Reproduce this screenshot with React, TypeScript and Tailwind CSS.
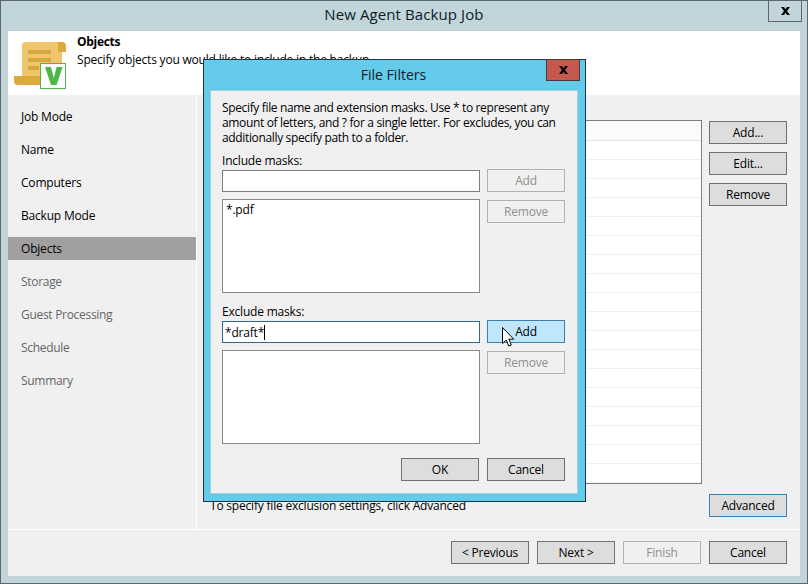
import type { ReactNode } from "react";

const font = { fontFamily: '"Open Sans", "Noto Sans", sans-serif' };

const navItems = [
	{ label: "Job Mode" },
	{ label: "Name" },
	{ label: "Computers" },
	{ label: "Backup Mode" },
	{ label: "Objects", active: true },
	{ label: "Storage", muted: true },
	{ label: "Guest Processing", muted: true },
	{ label: "Schedule", muted: true },
	{ label: "Summary", muted: true },
];

function Btn({
	children,
	state = "normal",
	className = "",
}: {
	children: ReactNode;
	state?: "normal" | "disabled" | "focus" | "hover";
	className?: string;
}) {
	const look = {
		normal: "bg-[#dddddd] border-[#707070] text-black",
		disabled: "bg-[#f0f0f0] border-[#adb2b5] text-[#8f8f8f]",
		focus: "bg-[#dddddd] border-[#3c7fb1] text-black",
		hover: "bg-[#bee6fd] border-[#3c7fb1] text-black",
	}[state];
	return (
		<button
			className={`flex h-[23px] w-[78px] shrink-0 items-center justify-center border text-[12px] tracking-[-0.2px] ${look} ${className}`}
		>
			{children}
		</button>
	);
}

function ScrollIcon() {
	return (
		<svg width="54" height="48" viewBox="0 0 54 48" className="shrink-0">
			<path d="M8 40V4a4 4 0 0 1 4-4h36v40z" fill="#efc66e" />
			<path d="M44 0h4a4 4 0 0 1 4 4v6h-8z" fill="#dbaa3c" />
			<path d="M0 34h28v9H4a4 4 0 0 1-4-4z" fill="#dbaa3c" />
			<rect x="14" y="8" width="23" height="4" fill="#d6a93f" />
			<rect x="14" y="16" width="23" height="4" fill="#d6a93f" />
			<rect x="14" y="24" width="11" height="4" fill="#d6a93f" />
			<rect x="26.500" y="21.500" width="25" height="25" fill="#fff" stroke="#4db848" />
			<path d="M31 25h6l2.800 11 2.800-11h6l-6 18h-5.600z" fill="#4db848" />
		</svg>
	);
}

function CloseGlyph() {
	return (
		<svg width="9" height="8" viewBox="0 0 9 8">
			<path d="M0 0h3l1.500 2.200 1.500-2.200h3l-3 4 3 4h-3l-1.500-2.200-1.500 2.200h-3l3-4z" fill="#000" />
		</svg>
	);
}

function Cursor() {
	return (
		<svg width="13" height="21" viewBox="0 0 13 21" className="absolute left-[15px] top-[7px]">
			<path
				d="M.5.500v16l3.700-3.500 2.500 6 2.600-1-2.500-5.800h5z"
				fill="#fff"
				stroke="#000"
				strokeWidth="1"
			/>
		</svg>
	);
}

function MaskGroup({
	label,
	className,
	inputValue,
	listValue,
	addState,
}: {
	label: string;
	className: string;
	inputValue?: string;
	listValue?: string;
	addState: "disabled" | "hover";
}) {
	return (
		<div className={className}>
			<div className="h-[17px] pt-px text-[12px] leading-[16px] tracking-[-0.2px]">{label}</div>
			<div className="flex gap-[7px]">
				<div className="flex w-[258px] flex-col gap-[7px] pt-[1px]">
					<div
						className={`flex h-[22px] items-center border bg-white px-[2px] pt-px text-[12px] tracking-[-0.2px] ${
							inputValue ? "border-[#2f6a92]" : "border-[#7a7f85]"
						}`}
					>
						{inputValue}
						{inputValue && <span className="h-[15px] w-px bg-black" />}
					</div>
					<div className="h-[94px] border border-[#858a8f] bg-white px-[3px] py-[2px] text-[12px] leading-[16px] tracking-[-0.2px]">
						{listValue}
					</div>
				</div>
				<div className="relative flex flex-col gap-2">
					<Btn state={addState}>Add</Btn>
					{addState === "hover" && <Cursor />}
					<Btn state="disabled">Remove</Btn>
				</div>
			</div>
		</div>
	);
}

function FileFilters() {
	return (
		<div className="absolute left-[202px] top-[58px] flex h-[443px] w-[383px] flex-col border border-[#1d3442] bg-[#65cbeb]">
			<div className="relative flex h-[30px] shrink-0 items-center justify-center pb-px pr-[2px] text-[14px] text-[#0c1d26]">
				File Filters
				<div className="absolute right-[5px] top-[-1px] flex h-[22px] w-[34px] items-center justify-center border border-[#4a3a38] bg-[#c4594f]">
					<CloseGlyph />
				</div>
			</div>
			<div className="mb-[7px] ml-[6px] mr-[7px] flex min-h-0 flex-1 flex-col border border-[#a5cfdd] bg-[#f0f0f0] pl-[11px] pt-[9px]">
				<p className="w-[345px] text-[12px] leading-[15px] tracking-[-0.35px] text-black">
					Specify file name and extension masks. Use * to represent any amount of letters, and ? for a single letter. For excludes, you can additionally specify path to a folder.
				</p>
				<MaskGroup label="Include masks:" className="mt-[7px]" listValue="*.pdf" addState="disabled" />
				<MaskGroup label="Exclude masks:" className="mt-[10px]" inputValue="*draft*" addState="hover" />
				<div className="mt-[14px] flex w-[343px] justify-end gap-2">
					<Btn>OK</Btn>
					<Btn>Cancel</Btn>
				</div>
			</div>
		</div>
	);
}

export default function App() {
	return (
		<div
			className="relative flex h-[584px] w-[808px] flex-col overflow-hidden border border-[#5c6870] bg-[#c2d5da] px-[7px] pb-[7px] text-black"
			style={font}
		>
			<div className="relative flex h-[30px] shrink-0 items-center justify-center pb-[3px] text-[15px] tracking-[0.1px] text-[#0c1d26]">
				New Agent Backup Job
				<div className="absolute right-[-2px] top-[-1px] flex h-[22px] w-[34px] items-center justify-center border border-[#5c6870]">
					<CloseGlyph />
				</div>
			</div>
			<div className="flex min-h-0 flex-1 flex-col bg-[#f0f0f0]">
				<div className="flex h-[64px] shrink-0 bg-white pl-[6px] pt-[11px]">
					<ScrollIcon />
					<div className="-mt-[8px] pl-[9px]">
						<div className="text-[12px] font-bold leading-[16px] tracking-[-0.3px]">Objects</div>
						<div className="mt-[2px] text-[12px] leading-[16px] tracking-[-0.2px]">
							Specify objects you would like to include in the backup
						</div>
					</div>
				</div>
				<div className="flex min-h-0 flex-1 border-b border-white">
					<div className="w-[189px] shrink-0 border-r border-white pt-[10px]">
						{navItems.map((item) => (
							<div
								key={item.label}
								className={`mb-[10px] flex h-[23px] items-center pl-[13px] pt-px text-[12px] ${
									item.muted ? "tracking-[-0.3px] text-[#666666]" : "tracking-[-0.2px]"
								} ${item.active ? "bg-[#a0a0a0]" : ""}`}
							>
								{item.label}
							</div>
						))}
					</div>
					<div className="flex min-w-0 flex-1 pl-[11px] pt-[25px]">
						<div className="flex-1">
							<div className="h-[364px] w-[494px] overflow-hidden border border-[#7a7f85] bg-white">
								<div className="h-[20px] border-b border-[#e3e3e3] bg-[#fbfbfb]" />
								{Array.from({ length: 18 }).map((_, i) => (
									<div key={i} className="h-[19px] border-b border-[#efefef]" />
								))}
							</div>
							<div className="mt-[14px] pl-[2px] text-[12px] leading-[16px] tracking-[-0.2px]">
								To specify file exclusion settings, click Advanced
							</div>
						</div>
						<div className="flex w-[91px] shrink-0 flex-col pt-px">
							<div className="flex flex-col gap-2">
								<Btn>Add...</Btn>
								<Btn>Edit...</Btn>
								<Btn>Remove</Btn>
							</div>
							<Btn state="focus" className="mt-[288px]">Advanced</Btn>
						</div>
					</div>
				</div>
				<div className="flex h-[46px] shrink-0 justify-end gap-2 pr-[13px] pt-[11px]">
					<Btn>&lt; Previous</Btn>
					<Btn>Next &gt;</Btn>
					<Btn state="disabled">Finish</Btn>
					<Btn>Cancel</Btn>
				</div>
			</div>
			<FileFilters />
		</div>
	);
}
